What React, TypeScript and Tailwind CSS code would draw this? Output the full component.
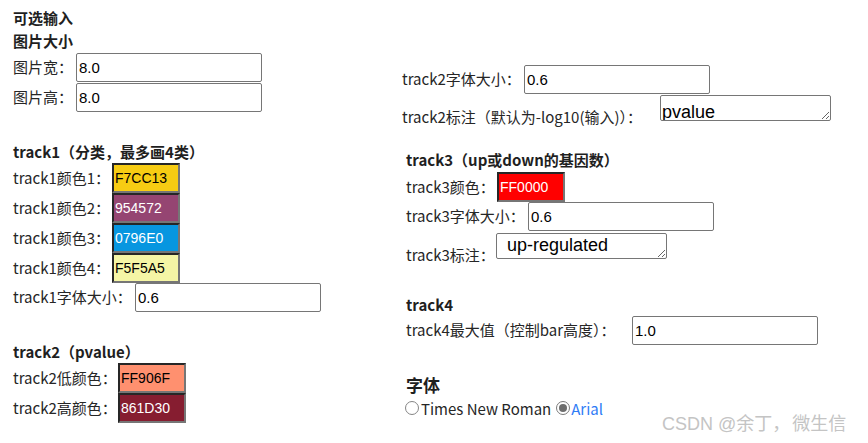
import React from 'react';

const cjk = "font-['Microsoft_YaHei','Noto_Sans_CJK_SC',sans-serif]";

function Heading({ children, className = '' }: { children: React.ReactNode; className?: string }) {
  return (
    <div className={`h-[20px] leading-[20px] text-[15px] font-bold text-[#1f1f1f] whitespace-nowrap ${className}`}>
      {children}
    </div>
  );
}

function TextRow({ label, width, value, className = '' }: { label: string; width: number; value: string; className?: string }) {
  return (
    <div className={`flex items-center h-[29px] ${className}`}>
      <span className="shrink-0 whitespace-nowrap text-[15px] text-[#262626]" style={{ width }}>
        {label}
      </span>
      <input
        type="text"
        readOnly
        defaultValue={value}
        className="w-[186px] h-[29px] border border-[#767676] rounded-[2px] px-[2px] text-[15px] text-black font-['Liberation_Sans',Arial,sans-serif] outline-none"
      />
    </div>
  );
}

function ColorRow({ label, width, color, light }: { label: string; width: number; color: string; light?: boolean }) {
  return (
    <div className="flex items-center h-[30px]">
      <span className="shrink-0 whitespace-nowrap text-[15px] text-[#262626]" style={{ width }}>
        {label}
      </span>
      <div
        className={`w-[68px] h-[30px] border-2 border-t-[#262626] border-l-[#262626] border-r-[#767676] border-b-[#767676] pl-[1px] flex items-center text-[14px] font-['Liberation_Sans',Arial,sans-serif] ${light ? 'text-black' : 'text-white'}`}
        style={{ backgroundColor: '#' + color }}
      >
        {color}
      </div>
    </div>
  );
}

function NoteRow({ label, width, value, boxWidth, padLeft, padTop }: { label: string; width: number; value: string; boxWidth: number; padLeft: number; padTop: number }) {
  return (
    <div className="flex items-start h-[26px]">
      <span className="shrink-0 whitespace-nowrap text-[15px] text-[#262626] leading-[20px] mt-[12px]" style={{ width }}>
        {label}
      </span>
      <textarea
        readOnly
        defaultValue={value}
        className="h-[26px] border border-[#767676] rounded-[2px] text-[18px] leading-[20px] text-black font-['Liberation_Sans',Arial,sans-serif] outline-none overflow-hidden"
        style={{ width: boxWidth, paddingLeft: padLeft, paddingTop: padTop }}
      />
    </div>
  );
}

export default function App() {
  return (
    <div className={`relative w-[868px] h-[443px] overflow-hidden bg-white flex ${cjk}`}>
      {/* left column */}
      <div className="w-[402px] pl-[13px] shrink-0 flex flex-col">
        <Heading className="mt-[8px]">可选输入</Heading>
        <Heading className="mt-[3px]">图片大小</Heading>
        <TextRow label="图片宽：" width={63} value="8.0" className="mt-[2px]" />
        <TextRow label="图片高：" width={63} value="8.0" className="mt-[1px]" />

        <Heading className="mt-[30px]">track1（分类，最多画4类）</Heading>
        <div className="mt-[1px] flex flex-col">
          <ColorRow label="track1颜色1：" width={99} color="F7CC13" light />
          <ColorRow label="track1颜色2：" width={99} color="954572" />
          <ColorRow label="track1颜色3：" width={99} color="0796E0" />
          <ColorRow label="track1颜色4：" width={99} color="F5F5A5" light />
        </div>
        <TextRow label="track1字体大小：" width={122} value="0.6" />

        <Heading className="mt-[30px]">track2（pvalue）</Heading>
        <div className="mt-[1px] flex flex-col">
          <ColorRow label="track2低颜色：" width={105} color="FF906F" light />
          <ColorRow label="track2高颜色：" width={105} color="861D30" />
        </div>
      </div>

      {/* right column */}
      <div className="flex-1 flex flex-col">
        <TextRow label="track2字体大小：" width={122} value="0.6" className="mt-[65px]" />
        <div className="mt-[1px]">
          <NoteRow label="track2标注（默认为-log10(输入)）：" width={258} value="pvalue" boxWidth={171} padLeft={1} padTop={6} />
        </div>

        <div className="pl-[4px] flex flex-col">
          <Heading className="mt-[29px]">track3（up或down的基因数）</Heading>
          <div className="mt-[2px]">
            <ColorRow label="track3颜色：" width={91} color="FF0000" />
          </div>
          <TextRow label="track3字体大小：" width={122} value="0.6" />
          <div className="mt-[2px]">
            <NoteRow label="track3标注：" width={90} value="up-regulated" boxWidth={171} padLeft={10} padTop={1} />
          </div>

          <Heading className="mt-[36px]">track4</Heading>
          <TextRow label="track4最大值（控制bar高度）：" width={226} value="1.0" className="mt-[1px]" />

          <div className="mt-[30px] h-[20px] leading-[20px] text-[17px] font-bold text-[#1f1f1f]">字体</div>
        </div>

        <div className="mt-[4px] flex items-center h-[20px] text-[15px] text-[#262626]">
          <span className="ml-[3px] w-[14px] h-[14px] rounded-full border-[1.5px] border-[#858585] bg-white shrink-0 -mt-[3px]" />
          <span className="ml-[2px]">Times New Roman</span>
          <span className="ml-[5px] w-[14px] h-[14px] rounded-full border-[1.5px] border-[#7a7a7a] bg-white shrink-0 flex items-center justify-center -mt-[3px]">
            <span className="w-[8px] h-[8px] rounded-full bg-[#6e6e6e]" />
          </span>
          <span className="ml-[1px] text-[#2f7cf6]">Arial</span>
        </div>
      </div>

      <div className="absolute left-[662px] top-[412px] text-[18px] leading-[24px] text-[#c4c4c4] whitespace-nowrap font-['Liberation_Sans','Noto_Sans_CJK_SC',sans-serif]">
        CSDN @余丁<span className="tracking-[2px]">，</span>微生信
      </div>
    </div>
  );
}
